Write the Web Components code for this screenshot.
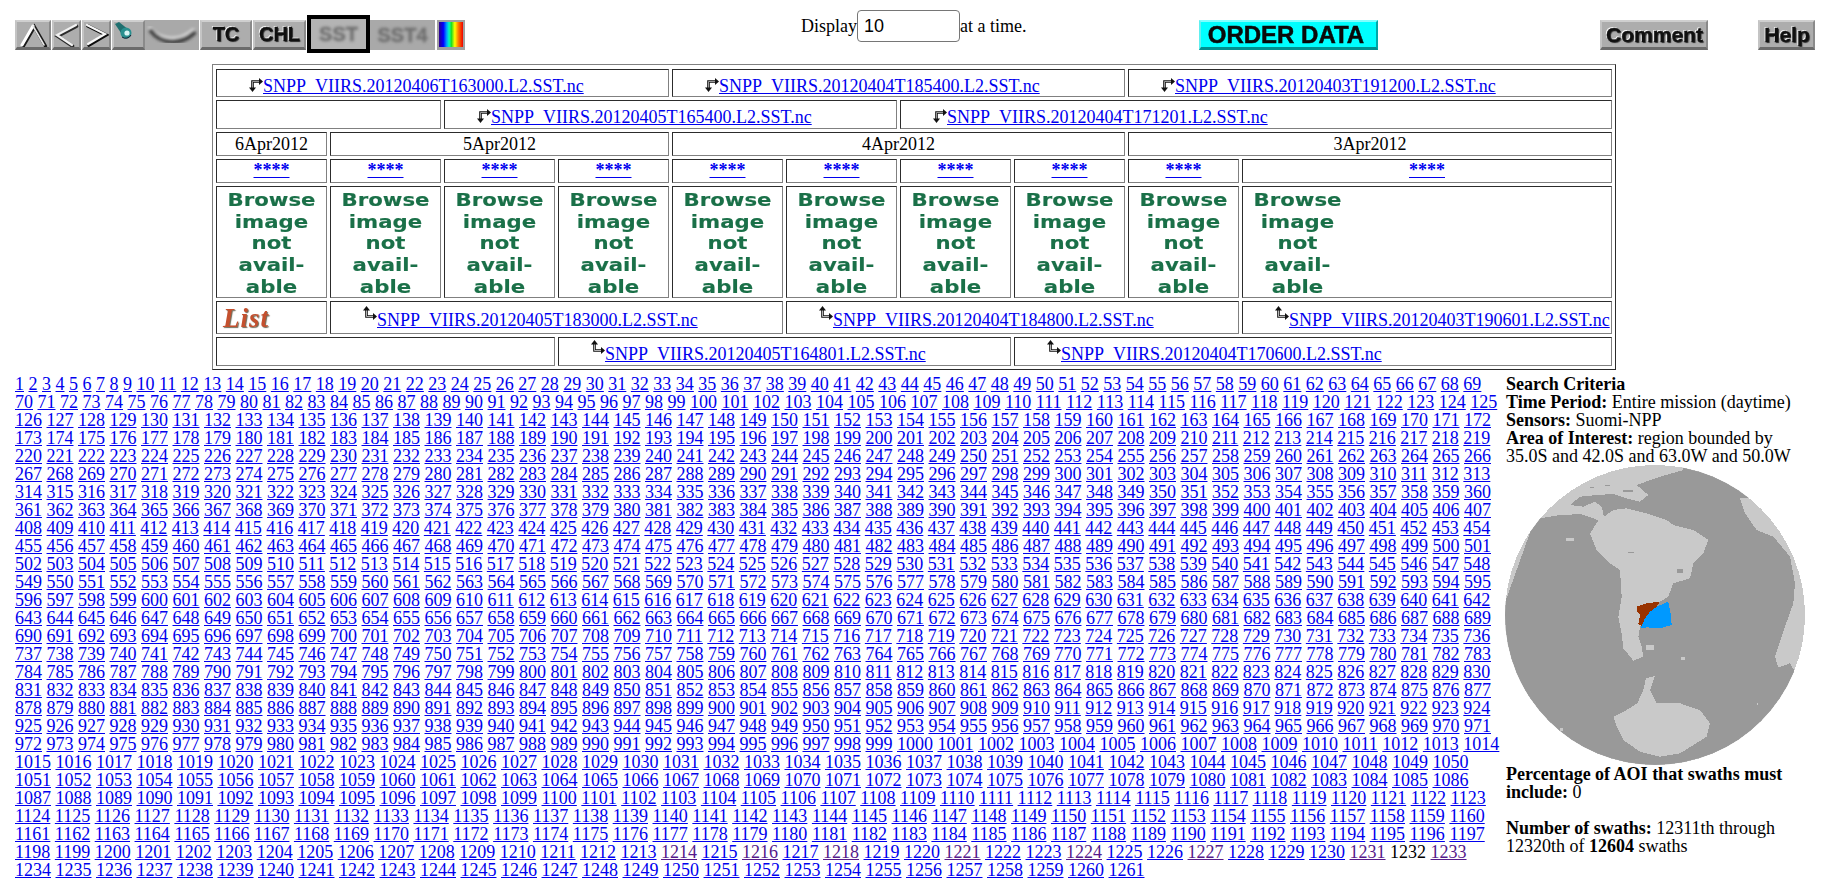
<!DOCTYPE html>
<html lang="en">

<head>
    <meta charset="UTF-8">
    <title>Level 1&amp;2 Browser</title>
    <style>
        body {
            margin: 0;
            font: 18px/18px "Liberation Serif", "Times New Roman", serif;
            color: #000;
            background: #fff;
        }
    </style>
</head>

<body>
    <top-bar>
        <button-strip>
            <bevel-button w="36" gap="1"><svg width="32" height="26" viewBox="0 0 32 26"><g fill="none" stroke-linecap="round"><path d="M5 23 16 4 27 23" stroke="#1a1a1a" stroke-width="3.4" transform="translate(1.4 1)"/><path d="M5 23 16 4" stroke="#fff" stroke-width="3"/><path d="M16 4 27 23" stroke="#e4e4e4" stroke-width="1.6"/></g></svg></bevel-button>
            <bevel-button w="29" gap="1"><svg width="25" height="26" viewBox="0 0 25 26"><g fill="none" stroke-linecap="round"><path d="M22 3 3 13 18 23" stroke="#2a2a2a" stroke-width="3.4" transform="translate(.6 1.2)"/><path d="M22 3 3 13 18 23" stroke="#f2f2f2" stroke-width="2.2"/></g></svg></bevel-button>
            <bevel-button w="29" gap="1"><svg width="25" height="26" viewBox="0 0 25 26"><g fill="none" stroke-linecap="round"><path d="M3 3 21 12 4 22" stroke="#0c0c0c" stroke-width="3.6" transform="translate(1 1)"/><path d="M3 3 21 12 4 22" stroke="#f8f8f8" stroke-width="2.2"/></g></svg></bevel-button>
            <bevel-button w="33" left><svg width="22" height="26" viewBox="0 0 22 26"><path d="M1 2 5 0 15 8 9 14Z" fill="#1f6f6f"/><circle cx="12" cy="11" r="5.5" fill="#2a8f8f"/><circle cx="13" cy="11" r="2.6" fill="#d8f4f4"/><path d="M8 15a6 6 0 0 0 9-2" fill="none" stroke="#123" stroke-width="1"/></svg></bevel-button>
            <flat-button w="54" style="margin-right:1px"><svg width="54" height="30" viewBox="0 0 54 30" style="display:block"><defs><filter id="soft"><feGaussianBlur stdDeviation="1.5"/></filter></defs><g fill="none" stroke-linecap="round" filter="url(#soft)"><path d="M6 11C16 24 36 25 49 13" stroke="#dedede" stroke-width="3.5" transform="translate(-1 -3)"/><path d="M6 11C16 24 36 25 49 13" stroke="#404040" stroke-width="4.5"/></g></svg></flat-button>
            <bevel-button w="52" gap="1" text="TC"></bevel-button>
            <bevel-button w="53" gap="1" text="CHL"></bevel-button>
            <flat-button w="63" text="SST" selected></flat-button>
            <flat-button w="65" text="SST4"></flat-button>
            <rainbow-button></rainbow-button>
        </button-strip>
        <display-count value="10"></display-count>
        <order-button>ORDER DATA</order-button>
        <bevel-button w="108" text="Comment" big style="margin:20px 0 0 222px"></bevel-button>
        <bevel-button w="57" text="Help" big style="margin:20px 0 0 50px"></bevel-button>
    </top-bar>

    <swath-grid>
        <swath-cell span="4" pad="7"><swath-link kind="down">SNPP_VIIRS.20120406T163000.L2.SST.nc</swath-link></swath-cell>
        <swath-cell span="4" pad="7"><swath-link kind="down">SNPP_VIIRS.20120404T185400.L2.SST.nc</swath-link></swath-cell>
        <swath-cell span="2" pad="7"><swath-link kind="down">SNPP_VIIRS.20120403T191200.L2.SST.nc</swath-link></swath-cell>

        <swath-cell span="2"></swath-cell>
        <swath-cell span="4" pad="7"><swath-link kind="down">SNPP_VIIRS.20120405T165400.L2.SST.nc</swath-link></swath-cell>
        <swath-cell span="4" pad="7"><swath-link kind="down">SNPP_VIIRS.20120404T171201.L2.SST.nc</swath-link></swath-cell>

        <swath-cell span="1" pad="2" center>6Apr2012</swath-cell>
        <swath-cell span="3" pad="2" center>5Apr2012</swath-cell>
        <swath-cell span="4" pad="2" center>4Apr2012</swath-cell>
        <swath-cell span="2" pad="2" center>3Apr2012</swath-cell>

        <swath-cell pad="1" center><star-link></star-link></swath-cell>
        <swath-cell pad="1" center><star-link></star-link></swath-cell>
        <swath-cell pad="1" center><star-link></star-link></swath-cell>
        <swath-cell pad="1" center><star-link></star-link></swath-cell>
        <swath-cell pad="1" center><star-link></star-link></swath-cell>
        <swath-cell pad="1" center><star-link></star-link></swath-cell>
        <swath-cell pad="1" center><star-link></star-link></swath-cell>
        <swath-cell pad="1" center><star-link></star-link></swath-cell>
        <swath-cell pad="1" center><star-link></star-link></swath-cell>
        <swath-cell pad="1" center><star-link></star-link></swath-cell>

        <swath-cell><no-browse></no-browse></swath-cell>
        <swath-cell><no-browse></no-browse></swath-cell>
        <swath-cell><no-browse></no-browse></swath-cell>
        <swath-cell><no-browse></no-browse></swath-cell>
        <swath-cell><no-browse></no-browse></swath-cell>
        <swath-cell><no-browse></no-browse></swath-cell>
        <swath-cell><no-browse></no-browse></swath-cell>
        <swath-cell><no-browse></no-browse></swath-cell>
        <swath-cell><no-browse></no-browse></swath-cell>
        <swath-cell><no-browse></no-browse></swath-cell>

        <swath-cell span="1"><list-mark></list-mark></swath-cell>
        <swath-cell span="4" pad="4"><swath-link kind="up">SNPP_VIIRS.20120405T183000.L2.SST.nc</swath-link></swath-cell>
        <swath-cell span="4" pad="4"><swath-link kind="up">SNPP_VIIRS.20120404T184800.L2.SST.nc</swath-link></swath-cell>
        <swath-cell span="1" pad="4"><swath-link kind="up">SNPP_VIIRS.20120403T190601.L2.SST.nc</swath-link></swath-cell>

        <swath-cell span="3"></swath-cell>
        <swath-cell span="4" pad="2"><swath-link kind="up">SNPP_VIIRS.20120405T164801.L2.SST.nc</swath-link></swath-cell>
        <swath-cell span="3" pad="2"><swath-link kind="up">SNPP_VIIRS.20120404T170600.L2.SST.nc</swath-link></swath-cell>
    </swath-grid>

    <results-area>
        <page-links total="1261" current="1232" visited="1214 1216 1218 1221 1224 1227 1231 1233"></page-links>
        <search-panel>
            <b>Search Criteria</b><br>
            <b>Time Period:</b> Entire mission (daytime)<br>
            <b>Sensors:</b> Suomi-NPP<br>
            <b>Area of Interest:</b> region bounded by 35.0S and 42.0S and 63.0W and 50.0W
            <globe-map></globe-map>
            <b>Percentage of AOI that swaths must include:</b> 0<br><br>
            <b>Number of swaths:</b> 12311th through 12320th of <b>12604</b> swaths
        </search-panel>
    </results-area>

    <script>
        const ARROWS = {
            down: '<path d="M3.5 11V3.5H11" fill="none" stroke="#111" stroke-width="2.6"/><path d="M3.5 10V3.5H10" fill="none" stroke="#bbb" stroke-width=".8"/><path d="M0 9.5H7L3.5 14Z" fill="#111"/><path d="M10 0V7L14 3.5Z" fill="#111"/>',
            up: '<path d="M3.5 4V10.5H11" fill="none" stroke="#111" stroke-width="2.6"/><path d="M3.5 4V10.5H10" fill="none" stroke="#ddd" stroke-width=".8"/><path d="M0 4.5H7L3.5 0Z" fill="#111"/><path d="M10 7V14L14 10.5Z" fill="#111"/>'
        };

        // plain holders: just a style and a slot
        function simpleElement(tag, css) {
            customElements.define(tag, class extends HTMLElement {
                constructor() {
                    super();
                    this.attachShadow({ mode: 'open' }).innerHTML = `<style>${css}</style><slot></slot>`;
                }
            });
        }

        simpleElement('top-bar', ':host { display: flex; align-items: flex-start; height: 64px; box-sizing: border-box; padding-left: 15px; }');
        simpleElement('button-strip', ':host { display: flex; align-items: flex-start; padding-top: 15px; width: 450px; flex: none; }');
        simpleElement('results-area', ':host { display: flex; align-items: flex-start; padding: 5px 0 0 15px; }');
        simpleElement('search-panel', ':host { display: block; width: 300px; margin-left: 4px; flex: none; }');

        const BUTTON_TEXT = `font: bold 20px "Liberation Sans", Arial, sans-serif; white-space: nowrap;`;

        class BevelButton extends HTMLElement {
            constructor() {
                super();
                const big = this.hasAttribute('big');
                const text = this.getAttribute('text') || '';
                const left = this.hasAttribute('left');
                this.attachShadow({ mode: 'open' }).innerHTML = `
                    <style>
                        :host { display: block; box-sizing: border-box; height: 30px; margin-top: 5px; flex: none;
                            background: #adadad; border-style: solid; border-width: 2px 2px 3px 2px;
                            border-color: #cfcfcf #8a8a8a #6b6b6b #c4c4c4; }
                        #in { display: flex; align-items: center; justify-content: ${left ? 'flex-start' : 'center'}; height: 100%; overflow: hidden; }
                        span { ${BUTTON_TEXT} font-size: ${big ? 21 : 20}px; color: #101010; -webkit-text-stroke: .4px #101010;
                            text-shadow: -1px -1px 0 #f8f8f8, 1px 1px 1px #333; filter: blur(.7px); }
                        svg { display: block; filter: blur(.5px); }
                    </style>
                    <div id="in">${text ? `<span>${text}</span>` : ''}<slot></slot></div>`;
            }

            connectedCallback() {
                this.style.width = this.getAttribute('w') + 'px';
                const gap = this.getAttribute('gap');
                if (gap) this.style.marginRight = gap + 'px';
            }
        }
        customElements.define('bevel-button', BevelButton);

        class FlatButton extends HTMLElement {
            constructor() {
                super();
                const text = this.getAttribute('text') || '';
                const sel = this.hasAttribute('selected');
                this.attachShadow({ mode: 'open' }).innerHTML = `
                    <style>
                        :host { display: block; box-sizing: border-box; flex: none;
                            height: ${sel ? 38 : 30}px; margin-top: ${sel ? 0 : 5}px;
                            background: ${sel ? '#b4b4b4' : '#a9a9a9'}; ${sel ? 'border: 4px solid #000;' : ''} }
                        #in { display: flex; align-items: center; justify-content: center; height: 100%; overflow: hidden; }
                        span { ${BUTTON_TEXT} color: #6e6e6e; -webkit-text-stroke: .4px #6e6e6e; filter: blur(1.5px); }
                    </style>
                    <div id="in">${text ? `<span>${text}</span>` : ''}<slot></slot></div>`;
            }

            connectedCallback() {
                this.style.width = this.getAttribute('w') + 'px';
            }
        }
        customElements.define('flat-button', FlatButton);

        customElements.define('rainbow-button', class extends HTMLElement {
            constructor() {
                super();
                this.attachShadow({ mode: 'open' }).innerHTML = `
                    <style>
                        :host { display: block; box-sizing: border-box; width: 28px; height: 30px; margin: 5px 0 0 2px;
                            border: solid #a0a0a0; border-width: 2px 2px 3px 2px; flex: none;
                            background: linear-gradient(90deg, #30008c 0, #0000ff 18%, #00a0ff 32%, #00ffc0 42%, #20e020 52%, #ffff00 66%, #ff8000 80%, #f00000 100%); }
                    </style>`;
            }
        });

        customElements.define('display-count', class extends HTMLElement {
            constructor() {
                super();
                this.attachShadow({ mode: 'open' }).innerHTML = `
                    <style>
                        :host { display: flex; align-items: baseline; margin: 10px 0 0 336px; flex: none; }
                        input { box-sizing: border-box; width: 103px; height: 32px; margin: 0; padding: 0 6px;
                            border: 1px solid #767676; border-radius: 4px; background: #fff; color: #000;
                            font: 18px "Liberation Sans", Arial, sans-serif; }
                    </style>
                    <span>Display</span><input type="text" value="${this.getAttribute('value')}"><span>at a time.</span>`;
            }
        });

        customElements.define('order-button', class extends HTMLElement {
            constructor() {
                super();
                this.attachShadow({ mode: 'open' }).innerHTML = `
                    <style>
                        :host { display: flex; box-sizing: border-box; align-items: center; justify-content: center; padding-right: 6px;
                            width: 179px; height: 30px; margin: 20px 0 0 173px; flex: none;
                            background: #00ffff; border-style: solid; border-width: 2px 2px 3px 2px;
                            border-color: #80ffff #00a8a8 #008f8f #60f0f0;
                            font: bold 24px "Liberation Sans", Arial, sans-serif; color: #0a0a0a; white-space: nowrap; }
                        span { -webkit-text-stroke: .5px #0a0a0a; filter: blur(.5px); }
                    </style>
                    <span><slot></slot></span>`;
            }
        });

        customElements.define('swath-grid', class extends HTMLElement {
            constructor() {
                super();
                this.attachShadow({ mode: 'open' }).innerHTML = `
                    <style>
                        :host { display: grid; box-sizing: border-box; width: 1404px; margin-left: 212px; padding: 4px 3px 3px; gap: 3px;
                            border: 1px outset gray;
                            grid-template-columns: repeat(9, 111px) 370px;
                            grid-template-rows: 28px 29px 24px 24px 112px 33px 29px; }
                    </style>
                    <slot></slot>`;
            }
        });

        customElements.define('swath-cell', class extends HTMLElement {
            constructor() {
                super();
                this.attachShadow({ mode: 'open' }).innerHTML = `
                    <style>
                        :host { display: block; box-sizing: border-box; border: 1px inset gray; white-space: nowrap; min-width: 0; }
                        :host([center]) { text-align: center; }
                    </style>
                    <slot></slot>`;
            }

            connectedCallback() {
                const span = this.getAttribute('span');
                if (span) this.style.gridColumn = `span ${span}`;
                const pad = this.getAttribute('pad');
                if (pad) this.style.paddingTop = pad + 'px';
            }
        });

        customElements.define('swath-link', class extends HTMLElement {
            constructor() {
                super();
                const kind = this.getAttribute('kind');
                this.attachShadow({ mode: 'open' }).innerHTML = `
                    <style>
                        :host { display: block; padding-left: 32px; }
                        svg { vertical-align: ${kind === 'up' ? '6px' : '0'}; }
                        a { color: #0000ee; }
                    </style>
                    <svg width="14" height="14" viewBox="0 0 14 14">${ARROWS[kind]}</svg><a href="#"><slot></slot></a>`;
            }
        });

        customElements.define('star-link', class extends HTMLElement {
            constructor() {
                super();
                this.attachShadow({ mode: 'open' }).innerHTML = `
                    <style>
                        :host { display: block; font-weight: bold; }
                        a { color: #0000ee; }
                    </style>
                    <a href="#">****</a>`;
            }
        });

        customElements.define('no-browse', class extends HTMLElement {
            constructor() {
                super();
                this.attachShadow({ mode: 'open' }).innerHTML = `
                    <style>
                        :host { display: block; width: 109px; height: 110px; padding-top: 2px; box-sizing: border-box; text-align: center;
                            font: bold 18px/21.7px "DejaVu Sans", Verdana, sans-serif; color: #1a7048; }
                        div { transform: scaleX(1.18); filter: blur(.6px); -webkit-text-stroke: .15px #1a7048; }
                    </style>
                    <div>Browse<br>image<br>not<br>avail-<br>able</div>`;
            }
        });

        customElements.define('list-mark', class extends HTMLElement {
            constructor() {
                super();
                this.attachShadow({ mode: 'open' }).innerHTML = `
                    <style>
                        :host { display: block; padding: 3px 0 0 6px;
                            font: italic bold 27px/27px "Liberation Serif", serif; color: #c4502e;
                            text-shadow: 1px 1px 1px #6e6a58; letter-spacing: 1px; }
                        span { filter: blur(.5px); display: inline-block; }
                    </style>
                    <span>List</span>`;
            }
        });

        customElements.define('page-links', class extends HTMLElement {
            constructor() {
                super();
                const root = this.attachShadow({ mode: 'open' });
                root.innerHTML = `
                    <style>
                        :host { display: block; width: 1487px; flex: none; }
                        a { color: #0000ee; }
                        a.seen { color: #551a8b; }
                    </style>`;
            }

            connectedCallback() {
                const total = +this.getAttribute('total');
                const current = +this.getAttribute('current');
                const visited = this.getAttribute('visited').split(' ').map(Number);
                let html = '';
                for (let n = 1; n <= total; n++) {
                    if (n === current) html += `${n} `;
                    else html += `<a href="#"${visited.includes(n) ? ' class="seen"' : ''}>${n}</a> `;
                }
                this.shadowRoot.innerHTML += html;
            }
        });

        customElements.define('globe-map', class extends HTMLElement {
            constructor() {
                super();
                // drawing coordinates are a 3x scale of the 300px box, offset by 75,285
                this.attachShadow({ mode: 'open' }).innerHTML = `
                    <style>
                        :host { display: block; width: 300px; height: 300px; margin-left: -1px; }
                        svg { display: block; }
                    </style>
                    <svg width="300" height="300" viewBox="75 285 900 900" shape-rendering="crispEdges">
                        <defs><clipPath id="disc"><circle cx="525" cy="735" r="450"/></clipPath></defs>
                        <circle cx="525" cy="735" r="450" fill="#c9c9c9"/>
                        <g clip-path="url(#disc)">
                            <path fill="#999" d="M60 740 160 460 180 445 235 436 300 432 340 445 355 452 330 490 350 540 390 580 420 600 425 680 415 740 425 790 430 835 460 872 490 860 485 830 475 800 480 770 540 695 565 680 580 640 630 625 640 580 670 550 685 510 640 480 580 465 560 450 500 430 440 415 400 420 372 440 365 410 345 395 310 410 270 405 300 380 350 375 400 372 440 385 480 395 505 375 470 345 540 320 610 300 600 270 820 270 820 385 780 385 795 430 830 480 880 500 930 560 945 640 940 700 915 770 885 860 895 892 930 880 1000 1000 1000 1200 60 1200Z"/>
                            <path fill="#c9c9c9" d="M400 1040 440 1020 472 1000 490 960 498 925 525 918 510 960 530 1000 600 1000 660 1020 690 1060 680 1100 640 1125 600 1150 540 1160 480 1145 430 1110 410 1070Z"/>
                            <path fill="#c9c9c9" d="M258 505h25v7h-25zM498 826h24v14h-24zM604 862h12v8h-12zM240 1075h8v8h-8zM830 1000h4v4h-4z"/>
                            <path fill="#999" d="M445 545h18v3h-18zM590 598h18v10h-18zM375 345h15v4h-15zM430 360h30v6h-30zM288 395h10v5h-10zM330 350h12v5h-12z"/>
                            <path fill="#993300" d="M471 710 500 700 540 695 530 710 510 725 495 745 487 770 475 762 480 735 470 725Z"/>
                            <path fill="#0099ff" d="M530 710 565 695 572 730 575 765 540 775 500 772 482 775 495 745 510 725Z"/>
                        </g>
                    </svg>`;
            }
        });
    </script>
</body>

</html>
